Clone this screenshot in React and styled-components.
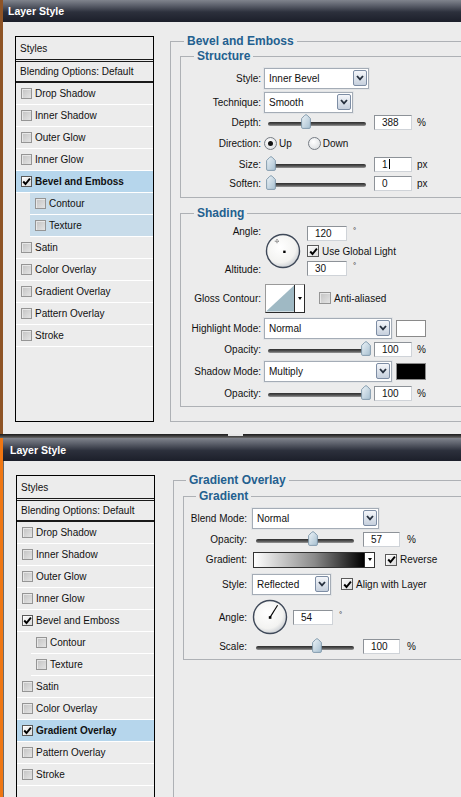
import React from "react";
import styled, { createGlobalStyle } from "styled-components";

const GlobalStyle = createGlobalStyle`
  * { box-sizing: border-box; }
  html, body { margin: 0; padding: 0; background: #ececec; }
  body {
    font-family: "Liberation Sans", Arial, sans-serif;
    font-size: 10px;
    color: #111;
  }
`;

const Page = styled.div`
  width: 461px;
  height: 797px;
  overflow: hidden;
  display: flex;
  flex-direction: column;
  background: #ececec;
`;

const Dialog = styled.section`
  display: flex;
  flex-direction: column;
  flex: ${(p) => (p.$fill ? "1 1 auto" : "none")};
  height: ${(p) => (p.$h ? `${p.$h}px` : "auto")};
  min-height: 0;
  border-left: 3px solid ${(p) => p.$edge};
  overflow: hidden;
`;

const TitleBar = styled.header`
  flex: none;
  height: ${(p) => p.$h}px;
  display: flex;
  align-items: center;
  padding-left: ${(p) => p.$pl}px;
  background: linear-gradient(#80848d 0%, #5b5f6a 25%, #2c303c 55%, #1c1f2a 100%);
  color: #fff;
  font-weight: bold;
  font-size: 10.5px;
`;

const Seam = styled.div`
  flex: none;
  height: 4px;
  display: flex;
  padding-left: 228px;
  background: linear-gradient(#1b1b1b, #3c3c3c 50%, #6a6a6a);
`;

const SeamGlint = styled.span`
  width: 15px;
  height: 2px;
  background: #e6e6e6;
`;

const Body = styled.div`
  flex: 1 1 auto;
  min-height: 0;
  display: flex;
  align-items: flex-start;
  gap: ${(p) => p.$gap}px;
  padding: ${(p) => p.$pt}px 0 0 ${(p) => p.$pl}px;
  background: #ececec;
  box-shadow: inset 1px 0 0 ${(p) => p.$frame || "transparent"};
`;

/* ---------- Styles list ---------- */

const StylesList = styled.ul`
  flex: none;
  list-style: none;
  margin: 0;
  padding: 0;
  width: 139px;
  height: ${(p) => p.$h}px;
  border: 1px solid #000;
  background: #ececec;
  overflow: hidden;
`;

const ListHead = styled.li`
  height: ${(p) => p.$h}px;
  display: flex;
  align-items: center;
  padding-left: 4px;
  border-bottom: ${(p) => p.$rule};
`;

const StyleRow = styled.li`
  height: 22px;
  display: flex;
  align-items: center;
  gap: 3px;
  padding-left: 5px;
  margin-left: ${(p) => (p.$indent ? 14 : 0)}px;
  border-bottom: 1px solid #fff;
  background: ${(p) => (p.$sel ? "#b6d6ec" : p.$sub ? "#c8dcea" : "transparent")};
  font-weight: ${(p) => (p.$sel ? "bold" : "normal")};
  white-space: nowrap;
`;

const Check = styled.span`
  flex: none;
  width: ${(p) => p.$s || 11}px;
  height: ${(p) => p.$s || 11}px;
  margin-left: ${(p) => p.$ml || 0}px;
  border: 1px solid ${(p) => (p.$on ? "#5a5a5a" : "#959595")};
  background: ${(p) =>
    p.$on
      ? "linear-gradient(135deg, #fbfbfb, #dcdcdc)"
      : "linear-gradient(135deg, #c2c2c2, #e4e4e4)"};
  box-shadow: inset 1px 1px 0 rgba(255, 255, 255, 0.55);
  display: flex;
  align-items: center;
  justify-content: center;
`;

const CheckLabel = styled.span`
  margin-left: ${(p) => p.$ml || 3}px;
  white-space: nowrap;
`;

function Tick() {
  return (
    <svg width="9" height="9" viewBox="0 0 9 9">
      <path d="M1.2 4.5 L3.5 7 L7.9 1.6" fill="none" stroke="#000" strokeWidth="1.9" />
    </svg>
  );
}

function CheckBox({ on, size, ml }) {
  return (
    <Check $on={on} $s={size} $ml={ml}>
      {on ? <Tick /> : null}
    </Check>
  );
}

const ITEMS = [
  { name: "Drop Shadow" },
  { name: "Inner Shadow" },
  { name: "Outer Glow" },
  { name: "Inner Glow" },
  { name: "Bevel and Emboss" },
  { name: "Contour", indent: true },
  { name: "Texture", indent: true },
  { name: "Satin" },
  { name: "Color Overlay" },
  { name: "Gradient Overlay" },
  { name: "Pattern Overlay" },
  { name: "Stroke" },
];

function StylesPanel({ height, selected, checked, subHighlight }) {
  return (
    <StylesList $h={height}>
      <ListHead $h={25} $rule="3px double #1a1a1a">Styles</ListHead>
      <ListHead $h={21} $rule="2px solid #1a1a1a">Blending Options: Default</ListHead>
      {ITEMS.map((it) => (
        <StyleRow
          key={it.name}
          $indent={it.indent}
          $sel={selected === it.name}
          $sub={subHighlight && it.indent}
        >
          <CheckBox on={checked.includes(it.name)} />
          <span>{it.name}</span>
        </StyleRow>
      ))}
    </StylesList>
  );
}

/* ---------- Right-side groups ---------- */

const Group = styled.fieldset`
  flex: none;
  margin: ${(p) => p.$mt || 0}px 0 0 0;
  padding: ${(p) => p.$pad};
  width: ${(p) => (p.$w ? `${p.$w}px` : "auto")};
  min-width: 0;
  min-height: ${(p) => (p.$minh ? `${p.$minh}px` : "0")};
  border: 1px solid #aeb1b5;
  display: flex;
  flex-direction: column;
`;

const Legend = styled.legend`
  margin-left: ${(p) => p.$ml}px;
  padding: 0 3px;
  font-size: 12px;
  font-weight: bold;
  line-height: 14px;
  color: #23608f;
`;

const Row = styled.div`
  flex: none;
  display: flex;
  align-items: center;
  height: ${(p) => p.$h}px;
  margin-top: ${(p) => p.$mt || 0}px;
`;

const Label = styled.span`
  flex: none;
  width: ${(p) => p.$w}px;
  margin-right: ${(p) => p.$gap}px;
  text-align: right;
  white-space: nowrap;
`;

const SelectBox = styled.div`
  flex: none;
  width: ${(p) => p.$w}px;
  height: ${(p) => p.$h || 21}px;
  display: flex;
  align-items: center;
  justify-content: space-between;
  padding: 0 1px 0 4px;
  background: #fff;
  border: 1px solid #a4acb6;
  box-shadow: 0 0 0 1px #e2e4e6;
`;

const DropBtn = styled.span`
  flex: none;
  width: 14px;
  height: 16px;
  border: 1px solid #7d8da4;
  border-radius: 2px;
  background: linear-gradient(#f4f6fa, #c6d0dd);
  display: flex;
  align-items: center;
  justify-content: center;
`;

function Select({ w, h, value }) {
  return (
    <SelectBox $w={w} $h={h}>
      <span>{value}</span>
      <DropBtn>
        <svg width="8" height="6" viewBox="0 0 8 6">
          <path d="M1 1 L4 4.4 L7 1" fill="none" stroke="#26303e" strokeWidth="1.8" />
        </svg>
      </DropBtn>
    </SelectBox>
  );
}

const Field = styled.span`
  flex: none;
  width: ${(p) => p.$w}px;
  height: 15px;
  margin-left: ${(p) => p.$ml || 0}px;
  padding-left: 7px;
  display: flex;
  align-items: center;
  background: #fff;
  border: 1px solid;
  border-color: #8d9298 #cfd3d8 #cfd3d8 #8d9298;
`;

const Caret = styled.span`
  width: 1px;
  height: 10px;
  margin-left: 1px;
  background: #000;
`;

const Unit = styled.span`
  margin-left: ${(p) => p.$ml || 5}px;
`;

const Deg = styled.span`
  align-self: flex-start;
  margin: ${(p) => p.$mt || 1}px 0 0 6px;
  font-size: 8px;
  line-height: 8px;
`;

const SliderBox = styled.div`
  position: relative;
  flex: none;
  width: 106px;
  height: 16px;
`;

const Track = styled.div`
  position: absolute;
  left: 4px;
  right: 4px;
  top: 8px;
  height: 4px;
  border-radius: 2px;
  background: linear-gradient(#2e2e2e, #555 55%, #9a9a9a);
`;

const Thumb = styled.svg`
  position: absolute;
  top: 0;
`;

function Slider({ pct }) {
  const left = 4 + pct * 98 - 5;
  return (
    <SliderBox>
      <Track />
      <Thumb width="10" height="15" viewBox="0 0 10 15" style={{ left }}>
        <defs>
          <linearGradient id="thg" x1="0" y1="0" x2="1" y2="1">
            <stop offset="0" stopColor="#eef4f8" />
            <stop offset="1" stopColor="#a6bfd0" />
          </linearGradient>
        </defs>
        <path
          d="M5 0.6 Q6 0.6 9.4 4.6 L9.4 13.2 Q9.4 14.4 8.2 14.4 L1.8 14.4 Q0.6 14.4 0.6 13.2 L0.6 4.6 Q4 0.6 5 0.6 Z"
          fill="url(#thg)"
          stroke="#7c95a8"
          strokeWidth="0.9"
        />
      </Thumb>
    </SliderBox>
  );
}

const RadioDot = styled.span`
  flex: none;
  width: 13px;
  height: 13px;
  margin-left: ${(p) => p.$ml || 0}px;
  border-radius: 50%;
  border: 1px solid #767c84;
  background: radial-gradient(circle at 40% 35%, #ffffff, #d5d8db);
  display: flex;
  align-items: center;
  justify-content: center;
  &::after {
    content: "";
    width: 5px;
    height: 5px;
    border-radius: 50%;
    background: ${(p) => (p.$on ? "#111" : "transparent")};
  }
`;

const Swatch = styled.span`
  flex: none;
  width: 30px;
  height: 17px;
  margin-left: 4px;
  border: 1px solid #8a8a8a;
  background: ${(p) => p.$color};
`;

const DialWrap = styled.span`
  flex: none;
  width: 36px;
  height: 36px;
  margin-left: ${(p) => p.$ml || 0}px;
  display: block;
`;

function Dial({ variant, ml }) {
  const id = `dial-${variant}`;
  return (
    <DialWrap $ml={ml}>
      <svg width="36" height="36" viewBox="0 0 36 36">
        <defs>
          <radialGradient id={id} cx="42%" cy="38%" r="65%">
            <stop offset="0" stopColor="#ffffff" />
            <stop offset="0.72" stopColor="#f3f3f1" />
            <stop offset="1" stopColor="#c9cdd2" />
          </radialGradient>
        </defs>
        <circle cx="18" cy="18" r="16.5" fill={`url(#${id})`} stroke="#3f4959" strokeWidth="1.4" />
        {variant === "light" ? (
          <g>
            <path d="M9.8 8.2h4.4M12 6v4.4" stroke="#444" strokeWidth="0.8" strokeDasharray="1 0.6" />
            <rect x="18.2" y="17.6" width="2.4" height="2.4" fill="#000" />
          </g>
        ) : (
          <g>
            <line x1="18" y1="18.4" x2="25.6" y2="6.2" stroke="#000" strokeWidth="1.1" />
            <rect x="16.8" y="17.2" width="2.6" height="2.6" fill="#000" />
          </g>
        )}
      </svg>
    </DialWrap>
  );
}

const DialBlock = styled.div`
  flex: none;
  display: flex;
  align-items: center;
  height: ${(p) => p.$h}px;
  margin-top: ${(p) => p.$mt || 0}px;
`;

const StackLabels = styled.div`
  flex: none;
  width: ${(p) => p.$w}px;
  height: 100%;
  display: flex;
  flex-direction: column;
  justify-content: space-between;
  align-items: flex-end;
  line-height: 14px;
`;

const StackRight = styled.div`
  flex: none;
  height: 100%;
  margin-left: ${(p) => p.$ml}px;
  padding: 1px 0;
  display: flex;
  flex-direction: column;
  justify-content: space-between;
`;

const Inline = styled.div`
  display: flex;
  align-items: center;
`;

const ContourBox = styled.span`
  flex: none;
  width: 40px;
  height: 29px;
  margin-left: 4px;
  display: flex;
  border: 1px solid #2a2a2a;
  border-left-color: #9a9a9a;
  border-top-color: #9a9a9a;
  background: #fff;
`;

const ArrowCell = styled.span`
  flex: none;
  width: ${(p) => p.$w || 10}px;
  height: 100%;
  display: flex;
  align-items: center;
  justify-content: center;
  border-left: 1px solid #2a2a2a;
  background: #fff;
  &::after {
    content: "";
    border-left: 2.5px solid transparent;
    border-right: 2.5px solid transparent;
    border-top: 3px solid #000;
  }
`;

const GradPicker = styled.span`
  flex: none;
  display: flex;
  height: 16px;
  margin-left: 1px;
  border: 1px solid #333;
`;

const GradBar = styled.span`
  width: 110px;
  height: 100%;
  background: linear-gradient(to right, #ffffff, #8a8a8a 55%, #000000);
`;

/* ---------- Dialog contents ---------- */

function BevelPanel() {
  const lw = 76;
  const gap = 3;
  return (
    <Group $mt={-2} $w={320} $pad="1px 0 14px 9px">
      <Legend $ml={4}>Bevel and Emboss</Legend>
      <Group $pad="4px 0 4px 4px">
        <Legend $ml={9}>Structure</Legend>
        <Row $h={22}>
          <Label $w={lw} $gap={gap}>Style:</Label>
          <Select w={105} value="Inner Bevel" />
        </Row>
        <Row $h={22} $mt={2}>
          <Label $w={lw} $gap={gap}>Technique:</Label>
          <Select w={89} value="Smooth" />
        </Row>
        <Row $h={18}>
          <Label $w={lw} $gap={gap}>Depth:</Label>
          <Slider pct={0.39} />
          <Field $w={38} $ml={4}>388</Field>
          <Unit>%</Unit>
        </Row>
        <Row $h={24}>
          <Label $w={lw} $gap={gap}>Direction:</Label>
          <RadioDot $on />
          <CheckLabel $ml={2}>Up</CheckLabel>
          <RadioDot $ml={16} />
          <CheckLabel $ml={2}>Down</CheckLabel>
        </Row>
        <Row $h={18}>
          <Label $w={lw} $gap={gap}>Size:</Label>
          <Slider pct={0.03} />
          <Field $w={38} $ml={4}>
            1<Caret />
          </Field>
          <Unit>px</Unit>
        </Row>
        <Row $h={20}>
          <Label $w={lw} $gap={gap}>Soften:</Label>
          <Slider pct={0.03} />
          <Field $w={38} $ml={4}>0</Field>
          <Unit>px</Unit>
        </Row>
      </Group>

      <Group $mt={8} $pad="5px 0 4px 4px">
        <Legend $ml={9}>Shading</Legend>
        <DialBlock $h={52}>
          <StackLabels $w={lw}>
            <span>Angle:</span>
            <span>Altitude:</span>
          </StackLabels>
          <Dial variant="light" ml={4} />
          <StackRight $ml={6}>
            <Inline>
              <Field $w={40}>120</Field>
              <Deg>°</Deg>
            </Inline>
            <Inline>
              <CheckBox on size={12} />
              <CheckLabel>Use Global Light</CheckLabel>
            </Inline>
            <Inline>
              <Field $w={40}>30</Field>
              <Deg>°</Deg>
            </Inline>
          </StackRight>
        </DialBlock>
        <Row $h={30} $mt={6}>
          <Label $w={lw} $gap={0}>Gloss Contour:</Label>
          <ContourBox>
            <svg width="29" height="27" viewBox="0 0 29 27">
              <path d="M0 27 L29 0 L29 27 Z" fill="#9fb9c4" />
            </svg>
            <ArrowCell />
          </ContourBox>
          <CheckBox size={12} ml={14} />
          <CheckLabel>Anti-aliased</CheckLabel>
        </Row>
        <Row $h={22} $mt={4}>
          <Label $w={lw} $gap={gap}>Highlight Mode:</Label>
          <Select w={128} value="Normal" />
          <Swatch $color="#ffffff" />
        </Row>
        <Row $h={18} $mt={1}>
          <Label $w={lw} $gap={gap}>Opacity:</Label>
          <Slider pct={1} />
          <Field $w={38} $ml={4}>100</Field>
          <Unit>%</Unit>
        </Row>
        <Row $h={22} $mt={2}>
          <Label $w={lw} $gap={gap}>Shadow Mode:</Label>
          <Select w={128} value="Multiply" />
          <Swatch $color="#000000" />
        </Row>
        <Row $h={18} $mt={2}>
          <Label $w={lw} $gap={gap}>Opacity:</Label>
          <Slider pct={1} />
          <Field $w={38} $ml={4}>100</Field>
          <Unit>%</Unit>
        </Row>
      </Group>
    </Group>
  );
}

function GradientPanel() {
  const lw = 59;
  const gap = 5;
  return (
    <Group $mt={-2} $w={320} $minh={340} $pad="2px 0 0 9px">
      <Legend $ml={3}>Gradient Overlay</Legend>
      <Group $pad="4px 0 4px 4px">
        <Legend $ml={8}>Gradient</Legend>
        <Row $h={22}>
          <Label $w={lw} $gap={gap}>Blend Mode:</Label>
          <Select w={127} value="Normal" />
        </Row>
        <Row $h={18} $mt={1}>
          <Label $w={lw} $gap={gap}>Opacity:</Label>
          <Slider pct={0.58} />
          <Field $w={37} $ml={5}>57</Field>
          <Unit $ml={7}>%</Unit>
        </Row>
        <Row $h={17} $mt={3}>
          <Label $w={lw} $gap={gap}>Gradient:</Label>
          <GradPicker>
            <GradBar />
            <ArrowCell $w={10} />
          </GradPicker>
          <CheckBox on size={12} ml={10} />
          <CheckLabel $ml={3}>Reverse</CheckLabel>
        </Row>
        <Row $h={22} $mt={5}>
          <Label $w={lw} $gap={gap}>Style:</Label>
          <Select w={79} value="Reflected" />
          <CheckBox on size={12} ml={10} />
          <CheckLabel $ml={3}>Align with Layer</CheckLabel>
        </Row>
        <DialBlock $h={36} $mt={4}>
          <Label $w={lw} $gap={0}>Angle:</Label>
          <Dial variant="angle" ml={5} />
          <Inline>
            <Field $w={40} $ml={5}>54</Field>
            <Deg $mt={1}>°</Deg>
          </Inline>
        </DialBlock>
        <Row $h={18} $mt={2}>
          <Label $w={lw} $gap={gap}>Scale:</Label>
          <Slider pct={0.62} />
          <Field $w={37} $ml={5}>100</Field>
          <Unit $ml={7}>%</Unit>
        </Row>
      </Group>
    </Group>
  );
}

export default function App() {
  return (
    <>
      <GlobalStyle />
      <Page>
        <Dialog $h={434} $edge="#8e5426">
          <TitleBar $h={22} $pl={5}>Layer Style</TitleBar>
          <Body $pt={14} $pl={12} $gap={16}>
            <StylesPanel
              height={386}
              selected="Bevel and Emboss"
              checked={["Bevel and Emboss"]}
              subHighlight
            />
            <BevelPanel />
          </Body>
        </Dialog>
        <Seam>
          <SeamGlint />
        </Seam>
        <Dialog $fill $edge="#ef7612">
          <TitleBar $h={23} $pl={7}>Layer Style</TitleBar>
          <Body $pt={14} $pl={13} $gap={18} $frame="#6a6a6a">
            <StylesPanel
              height={340}
              selected="Gradient Overlay"
              checked={["Bevel and Emboss", "Gradient Overlay"]}
            />
            <GradientPanel />
          </Body>
        </Dialog>
      </Page>
    </>
  );
}
